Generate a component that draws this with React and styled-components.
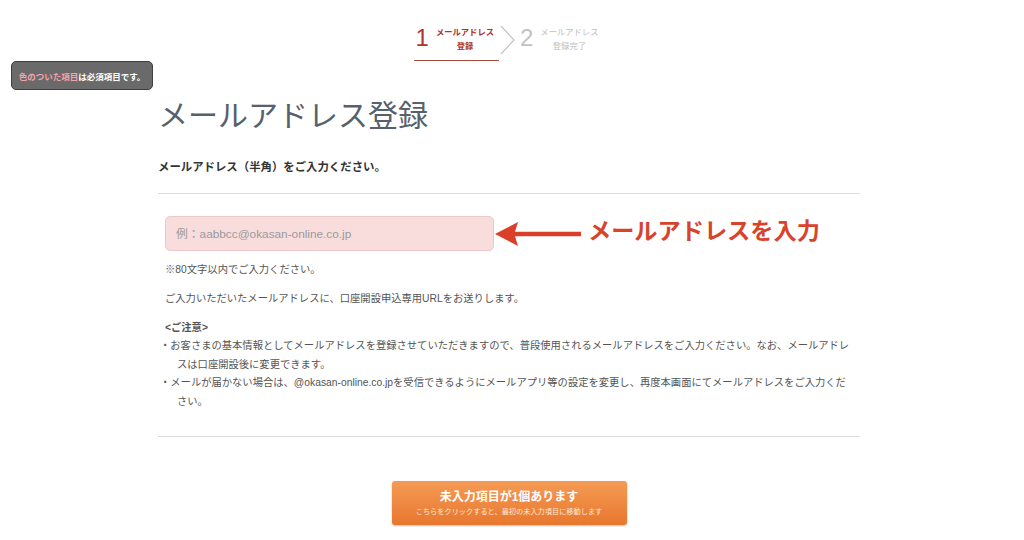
import React from "react";
import styled, { createGlobalStyle } from "styled-components";

const GlobalStyle = createGlobalStyle`
  html, body {
    margin: 0;
    padding: 0;
    background: #ffffff;
  }
  body {
    font-family: "Liberation Sans", "Noto Sans CJK JP", sans-serif;
    color: #555;
  }
`;

const steps = [
  { num: "1", lines: ["メールアドレス", "登録"], active: true },
  { num: "2", lines: ["メールアドレス", "登録完了"], active: false },
];

const bullets = [
  "・お客さまの基本情報としてメールアドレスを登録させていただきますので、普段使用されるメールアドレスをご入力ください。なお、メールアドレスは口座開設後に変更できます。",
  "・メールが届かない場合は、@okasan-online.co.jpを受信できるようにメールアプリ等の設定を変更し、再度本画面にてメールアドレスをご入力ください。",
];

export default function App() {
  return (
    <Page>
      <GlobalStyle />
      <RequiredNote>
        <em>色のついた項目</em>は必須項目です。
      </RequiredNote>

      <StepBar>
        {steps.map((s, i) => (
          <React.Fragment key={s.num}>
            {i > 0 && (
              <Chevron viewBox="0 0 15 30">
                <polyline points="1,1 14,15 1,29" fill="none" stroke="#c4c4c4" strokeWidth="1.2" />
              </Chevron>
            )}
            <Step $active={s.active}>
              <StepNum $active={s.active}>{s.num}</StepNum>
              <StepLabel $active={s.active}>
                {s.lines.map((l) => (
                  <span key={l}>{l}</span>
                ))}
              </StepLabel>
            </Step>
          </React.Fragment>
        ))}
      </StepBar>

      <Main>
        <Title>メールアドレス登録</Title>
        <Lead>メールアドレス（半角）をご入力ください。</Lead>
        <Divider />

        <Body>
          <FieldRow>
            <EmailInput type="text" placeholder="例：aabbcc@okasan-online.co.jp" />
            <Arrow viewBox="0 0 86 26">
              <polygon points="0,13 23,1 20,10.8 86,10.8 86,15.2 20,15.2 23,25" fill="#dc3f29" />
            </Arrow>
            <Annotation>メールアドレスを入力</Annotation>
          </FieldRow>

          <Note>※80文字以内でご入力ください。</Note>
          <Text>ご入力いただいたメールアドレスに、口座開設申込専用URLをお送りします。</Text>

          <CautionHead>&lt;ご注意&gt;</CautionHead>
          <BulletList>
            {bullets.map((b) => (
              <li key={b}>{b}</li>
            ))}
          </BulletList>
        </Body>

        <Divider $bottom />

        <ButtonWrap>
          <SubmitButton type="button">
            <strong>未入力項目が1個あります</strong>
            <small>こちらをクリックすると、最初の未入力項目に移動します</small>
          </SubmitButton>
        </ButtonWrap>
      </Main>
    </Page>
  );
}

const Page = styled.div`
  position: relative;
  width: 1024px;
  min-height: 540px;
  padding-top: 22px;
  box-sizing: border-box;
`;

const RequiredNote = styled.div`
  position: absolute;
  left: 11px;
  top: 61px;
  width: 142px;
  height: 29px;
  box-sizing: border-box;
  background: #6a6a6a;
  border: 1px solid #3f3f3f;
  border-radius: 5px;
  color: #fff;
  font-size: 8.5px;
  font-weight: bold;
  display: flex;
  align-items: center;
  justify-content: center;
  em {
    font-style: normal;
    color: #f3a3ad;
  }
`;

const StepBar = styled.div`
  display: flex;
  justify-content: center;
  align-items: flex-start;
  padding-right: 7px;
`;

const Step = styled.div`
  display: flex;
  align-items: center;
  gap: 7px;
  padding: 2px 5px 8px 2px;
  border-bottom: 1.5px solid ${(p) => (p.$active ? "#a94a3f" : "transparent")};
`;

const StepNum = styled.div`
  font-size: 24px;
  line-height: 28px;
  color: ${(p) => (p.$active ? "#b1342a" : "#c3c3c3")};
`;

const StepLabel = styled.div`
  display: flex;
  flex-direction: column;
  align-items: center;
  font-family: "Noto Sans CJK JP", sans-serif;
  font-size: 8.3px;
  line-height: 14px;
  font-weight: ${(p) => (p.$active ? "bold" : "normal")};
  color: ${(p) => (p.$active ? "#a8342b" : "#c0c0c0")};
`;

const Chevron = styled.svg`
  width: 15px;
  height: 30px;
  margin: 3px 3px 0 1px;
`;

const Main = styled.div`
  width: 702px;
  margin-left: 158px;
`;

const Title = styled.h1`
  margin: 34px 0 0;
  font-family: "Noto Sans CJK JP", sans-serif;
  font-size: 30px;
  line-height: 36px;
  font-weight: 400;
  color: #57606b;
`;

const Lead = styled.p`
  margin: 27px 0 0;
  font-family: "Noto Sans CJK JP", sans-serif;
  font-size: 11.4px;
  line-height: 16px;
  font-weight: bold;
  color: #333;
`;

const Divider = styled.hr`
  margin: ${(p) => (p.$bottom ? "25px" : "19px")} 0 0;
  border: none;
  border-top: 1px solid #dcdcdc;
  height: 0;
`;

const Body = styled.div`
  padding: 0 4px 0 2px;
  font-size: 10.3px;
  color: #555;
`;

const FieldRow = styled.div`
  display: flex;
  align-items: center;
  margin: 22px 0 0 5px;
`;

const EmailInput = styled.input`
  width: 329px;
  height: 35px;
  box-sizing: border-box;
  background: #f9dddd;
  border: 1px solid #ecc8c8;
  border-radius: 5px;
  padding: 0 10px;
  font-family: "Liberation Sans", "Noto Sans CJK JP", sans-serif;
  font-size: 11.8px;
  outline: none;
  &::placeholder {
    color: #9a9a9a;
  }
`;

const Arrow = styled.svg`
  width: 86px;
  height: 26px;
  margin-left: 1px;
`;

const Annotation = styled.div`
  margin: -9px 0 0 7px;
  font-family: "Noto Sans CJK JP", sans-serif;
  font-size: 23.2px;
  font-weight: bold;
  color: #d8432c;
  white-space: nowrap;
`;

const Note = styled.p`
  margin: 11px 0 0 5px;
  line-height: 16px;
`;

const Text = styled.p`
  margin: 13px 0 0 5px;
  line-height: 16px;
`;

const CautionHead = styled.p`
  margin: 12px 0 0 5px;
  line-height: 18px;
  font-weight: bold;
`;

const BulletList = styled.ul`
  list-style: none;
  margin: 0;
  padding: 0;
  li {
    padding-left: 17px;
    text-indent: -17px;
    line-height: 18.5px;
  }
`;

const ButtonWrap = styled.div`
  display: flex;
  justify-content: center;
  margin-top: 44px;
`;

const SubmitButton = styled.button`
  width: 235px;
  height: 44px;
  border: none;
  border-radius: 3px;
  background: linear-gradient(#f59b55, #e8772e);
  box-shadow: 0 1px 2px rgba(0, 0, 0, 0.25);
  color: #fff;
  display: flex;
  flex-direction: column;
  align-items: center;
  justify-content: center;
  gap: 2px;
  font-family: "Liberation Sans", "Noto Sans CJK JP", sans-serif;
  strong {
    font-size: 12px;
    line-height: 16px;
  }
  small {
    font-size: 7.2px;
    line-height: 10px;
    color: #fde8d8;
  }
`;
